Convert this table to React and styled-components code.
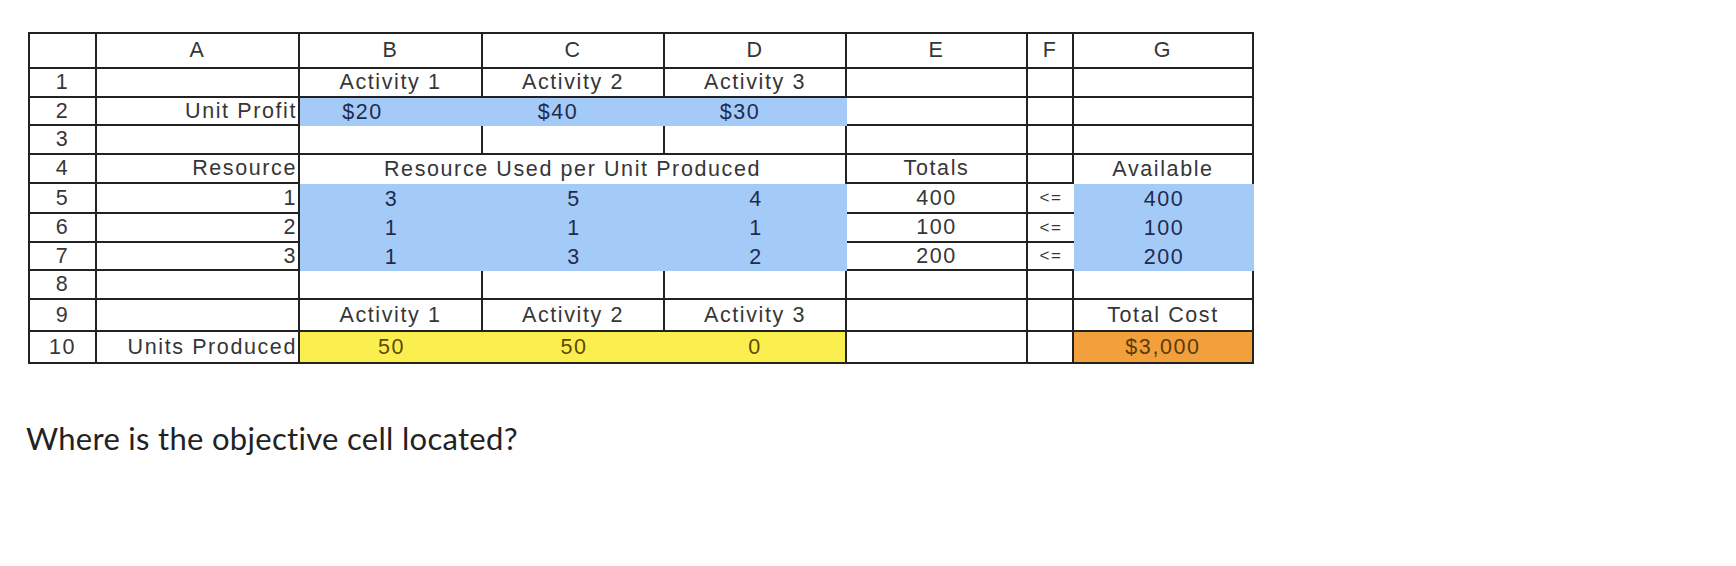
import React from 'react';
import styled, { createGlobalStyle } from 'styled-components';

const GlobalStyle = createGlobalStyle`
  html, body {
    margin: 0;
    padding: 0;
    background: #ffffff;
  }
`;

const Page = styled.div`
  padding: 32px 0 0 28px;
`;

const Sheet = styled.div`
  display: grid;
  grid-template-columns: 67px 203px 183px 182px 182px 181px 46px 180px;
  grid-template-rows: 35px 29px 28px 29px 29px 30px 29px 28px 29px 32px 32px;
  width: max-content;
  border-top: 2px solid #222;
  border-left: 2px solid #222;
  font-family: "Liberation Sans", Arial, sans-serif;
  font-size: 21.5px;
  letter-spacing: 1.6px;
  color: #363636;
`;

const fills = {
  blue: '#a4cbf8',
  yellow: '#fbef4f',
  orange: '#f2a03b',
};

const inks = {
  blue: '#1f2a4d',
  yellow: '#5a4a08',
  orange: '#5a3a0a',
};

const Cell = styled.div`
  box-sizing: border-box;
  display: flex;
  align-items: center;
  justify-content: ${(p) => (p.$align === 'right' ? 'flex-end' : 'center')};
  padding: 0 ${(p) => p.$pr || (p.$align === 'right' ? 1 : 0)}px 0 0;
  grid-column: span ${(p) => p.$span || 1};
  border-right: ${(p) => (p.$noRight ? 'none' : '2px solid #222')};
  border-bottom: ${(p) => (p.$noBottom ? 'none' : '2px solid #222')};
  background: ${(p) => (p.$fill ? fills[p.$fill] : 'transparent')};
  color: ${(p) => (p.$fill ? inks[p.$fill] : 'inherit')};
  font-size: ${(p) => (p.$small ? '17px' : 'inherit')};
  white-space: pre;
  overflow: hidden;
`;

const Question = styled.p`
  margin: 55px 0 0 -2px;
  font-family: Lato, "Open Sans", sans-serif;
  font-size: 31px;
  letter-spacing: 0.3px;
  color: #222;
`;

const blue = (t, extra = {}) => ({ t, fill: 'blue', noRight: true, noBottom: true, ...extra });
const yellow = (t, extra = {}) => ({ t, fill: 'yellow', noRight: true, ...extra });
const num = (t) => ({ t, align: 'right' });

const rows = [
  ['', 'A', 'B', 'C', 'D', 'E', 'F', 'G'],
  ['1', '', 'Activity 1', 'Activity 2', 'Activity 3', '', '', ''],
  ['2', num('Unit Profit'), blue('$20', { pr: 58 }), blue('$40', { pr: 32 }), blue('$30', { pr: 32 }), '', '', ''],
  ['3', '', '', '', '', '', '', ''],
  ['4', num('Resource'), { t: 'Resource Used per Unit Produced', span: 3, noBottom: true }, 'Totals', '', { t: 'Available', noBottom: true }],
  ['5', num('1'), blue('3'), blue('5'), blue('4'), '400', { t: '<=', small: true, noRight: true }, blue('400')],
  ['6', num('2'), blue('1'), blue('1'), blue('1'), '100', { t: '<=', small: true, noRight: true }, blue('100')],
  ['7', num('3'), blue('1'), blue('3'), blue('2'), '200', { t: '<=', small: true, noRight: true }, blue('200')],
  ['8', '', '', '', '', '', '', ''],
  ['9', '', 'Activity 1', 'Activity 2', 'Activity 3', '', '', 'Total Cost'],
  ['10', num('Units Produced'), yellow('50'), yellow('50'), yellow('0', { noRight: false }), '', '', { t: '$3,000', fill: 'orange' }],
];

const App = () => (
  <Page>
    <GlobalStyle />
    <Sheet>
      {rows.map((row, r) =>
        row.map((c, i) => {
          const cell = typeof c === 'string' ? { t: c } : c;
          return (
            <Cell
              key={`${r}-${i}`}
              $span={cell.span}
              $align={cell.align}
              $fill={cell.fill}
              $noRight={cell.noRight}
              $noBottom={cell.noBottom}
              $pr={cell.pr}
              $small={cell.small}
            >
              {cell.t}
            </Cell>
          );
        })
      )}
    </Sheet>
    <Question>Where is the objective cell located?</Question>
  </Page>
);

export default App;
